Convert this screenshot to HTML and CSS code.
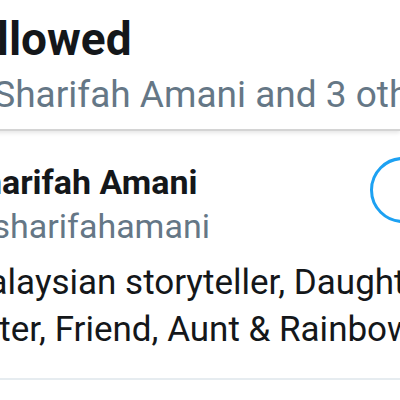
FILE: index.html
```html
<!DOCTYPE html>
<html lang="en">
<head>
    <meta charset="UTF-8">
    <meta name="viewport" content="width=device-width, initial-scale=1.0">
    <title>Followed</title>
    <link rel="stylesheet" href="styles.css">
</head>
<body>
    <div id="page">
        <header class="top-bar">
            <h1 class="title">Followed</h1>
            <p class="subtitle">by Sharifah Amani and 3 others</p>
        </header>

        <div class="user-row">
            <div class="user-info">
                <div class="user-name">Sharifah Amani</div>
                <div class="user-handle">@sharifahamani</div>
            </div>
            <button class="follow-btn">Follow</button>
        </div>
        <div class="user-bio">
            <span class="bio-line">Malaysian storyteller, Daughter,</span>
            <span class="bio-line bio-wrap">Sister, Friend, Aunt &amp; Rainbow</span>
        </div>
        <div class="row-divider"></div>
    </div>
</body>
</html>
```

FILE: styles.css
```css
html, body {
    margin: 0;
    padding: 0;
    background-color: #fff;
    overflow: hidden;
}
body {
    font-family: 'Roboto', 'Liberation Sans', sans-serif;
    width: 400px;
    height: 400px;
}
#page {
    width: 400px;
    height: 400px;
    overflow: hidden;
}
.top-bar {
    padding: 11px 0 12px 0;
    margin-left: -54px;
    width: 454px;
    border-bottom: 2px solid #d4d4d4;
    box-shadow: 0 2px 4px rgba(0, 0, 0, 0.1);
    white-space: nowrap;
}
.title {
    margin: 0;
    font-size: 46px;
    font-weight: 700;
    color: #14171a;
    line-height: 56px;
}
.subtitle {
    margin: 6px 0 0 0;
    font-size: 37px;
    color: #657786;
    line-height: 44px;
}
.user-row {
    display: flex;
    align-items: flex-start;
    margin-top: 31px;
    white-space: nowrap;
}
.user-info {
    flex-shrink: 0;
    margin-left: -38px;
    width: 408px;
}
.user-name {
    font-size: 34px;
    font-weight: 700;
    color: #14171a;
    line-height: 40px;
}
.user-handle {
    font-size: 34px;
    color: #657786;
    line-height: 48px;
}
.follow-btn {
    flex-shrink: 0;
    width: 200px;
    height: 66px;
    margin-top: -5px;
    border: 3px solid #1da1f2;
    border-radius: 33px;
    background-color: #fff;
    color: #1da1f2;
    font-family: inherit;
    font-size: 30px;
    font-weight: 700;
}
.user-bio {
    margin-top: 9px;
    margin-left: -42px;
    font-size: 35px;
    color: #14171a;
    line-height: 47px;
    white-space: nowrap;
}
.bio-line {
    display: block;
}
.bio-wrap {
    margin-left: -6px;
}
.row-divider {
    margin-top: 25px;
    height: 2px;
    background-color: #e6ecf0;
}
```
